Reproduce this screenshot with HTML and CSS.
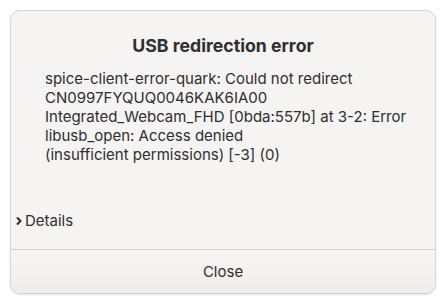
FILE: index.html
```html
<!DOCTYPE html>
<html>
<head>
<meta charset="utf-8">
<link rel="stylesheet" href="styles.css">
</head>
<body>
<div class="dialog">
  <div class="content">
    <h1 class="title">USB redirection error</h1>
    <p class="message">spice-client-error-quark: Could not redirect<br>CN0997FYQUQ0046KAK6IA00<br>Integrated_Webcam_FHD [0bda:557b] at 3-2: Error<br>libusb_open: Access denied<br>(insufficient permissions) [-3] (0)</p>
  </div>
  <div class="details">
    <svg class="chev" width="8" height="10" viewBox="0 0 8 10"><path d="M2 1.5 L5.5 5 L2 8.5" fill="none" stroke="#2e2e2e" stroke-width="2"/></svg>
    <span>Details</span>
  </div>
  <div class="actions">
    <button class="btn">Close</button>
  </div>
</div>
</body>
</html>
```
FILE: styles.css
```css
html, body {
  margin: 0;
  padding: 0;
  background: #ffffff;
}
body {
  padding: 10px;
  font-family: Inter, "Noto Sans", sans-serif;
  color: #2e2e2e;
}
.dialog {
  width: 426px;
  height: 284px;
  box-sizing: border-box;
  background: #f5f4f3;
  border: 1px solid #d6d6d6;
  border-radius: 10px;
  box-shadow: 0 1px 2px rgba(0,0,0,0.12);
  display: flex;
  flex-direction: column;
  overflow: hidden;
}
.content {
  padding: 24px 34px 0 34px;
}
.title {
  margin: 0;
  text-align: center;
  font-size: 17.7px;
  font-weight: 700;
  line-height: 22px;
  color: #2f2f2f;
}
.message {
  margin: 12px 0 0 0;
  font-size: 15px;
  line-height: 19px;
  color: #2e2e2e;
  white-space: nowrap;
}
.details {
  margin-top: auto;
  display: flex;
  align-items: center;
  gap: 2px;
  padding: 0 0 18px 4px;
  font-size: 15px;
  line-height: 20px;
}
.chev {
  display: block;
}
.actions {
  border-top: 1px solid #cfcfcf;
  display: flex;
}
.btn {
  flex: 1;
  height: 43px;
  border: 0;
  background: linear-gradient(#f6f5f4, #efeeed);
  font-family: Inter, "Noto Sans", sans-serif;
  font-size: 15px;
  color: #2e2e2e;
  padding: 0;
}
```
